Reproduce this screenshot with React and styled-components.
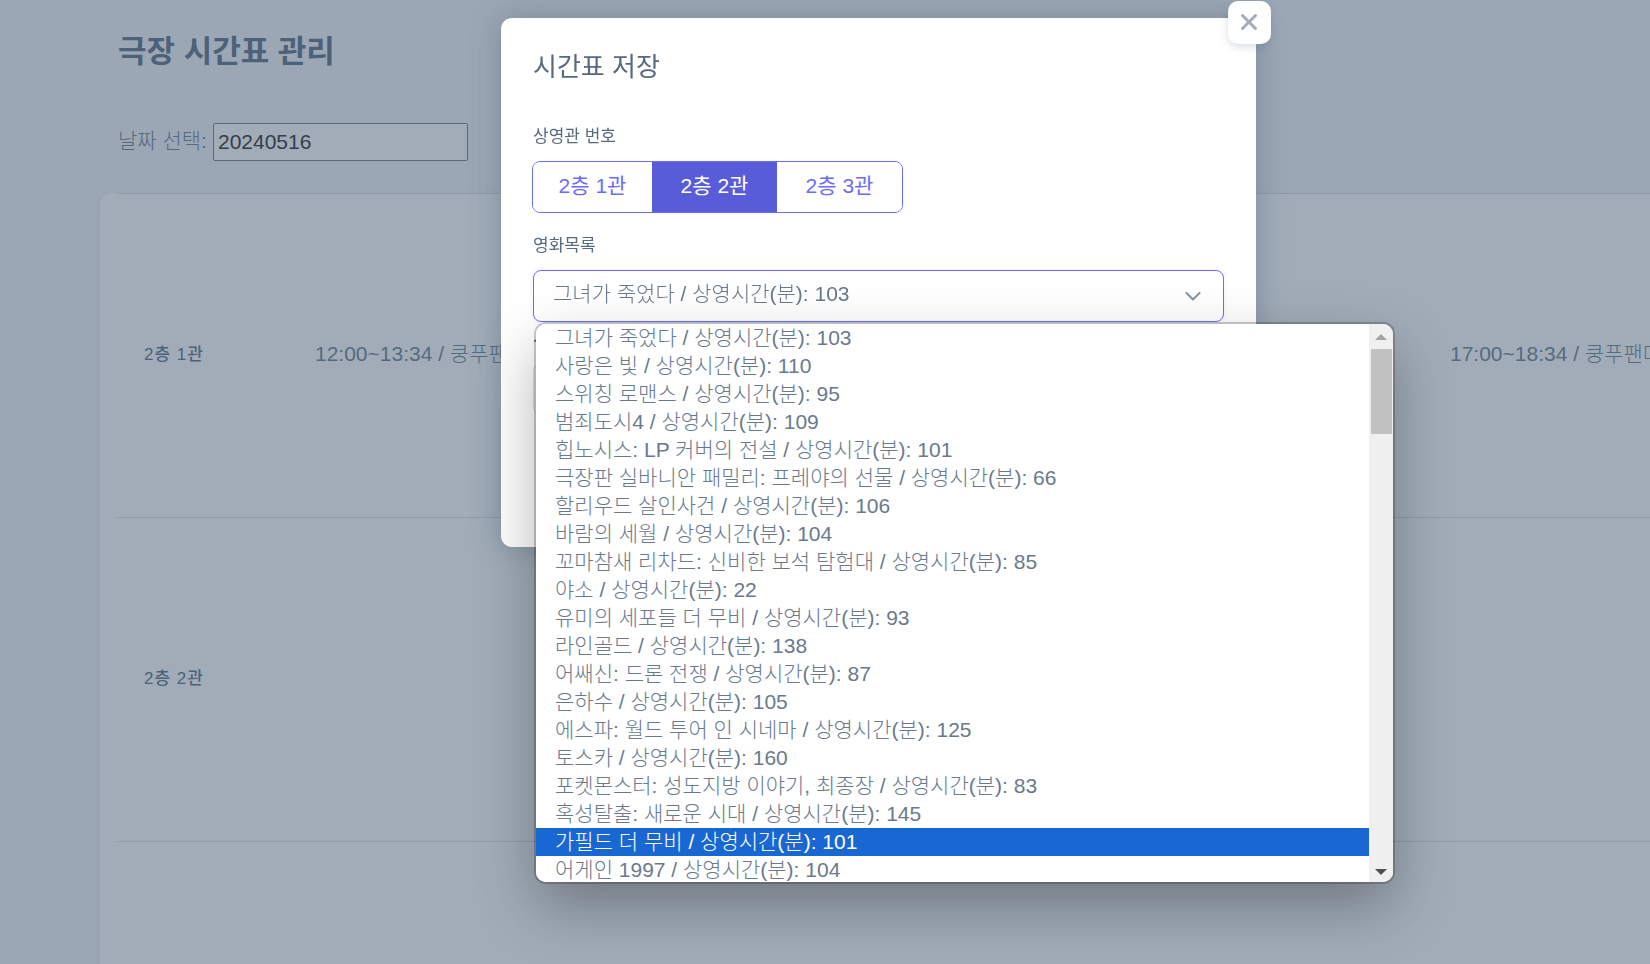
import React from "react";
import styled, { createGlobalStyle, css } from "styled-components";

const GlobalStyle = createGlobalStyle`
  *, *::before, *::after { box-sizing: border-box; }
  html, body, #root { height: 100%; }
  body {
    margin: 0;
    overflow: hidden;
    background: #f5f5f9;
    color: #697a8d;
    font-family: "Liberation Sans", "Noto Sans CJK KR", sans-serif;
    font-size: 21px;
    font-weight: 300;
    line-height: 32px;
  }
  button, input, select { font: inherit; }
`;

const Page = styled.main`
  height: 100%;
  padding: 30px 0 0 100px;
  overflow: hidden;
`;

const PageTitle = styled.h4`
  margin: 0;
  padding-left: 18px;
  color: #566a7f;
  font-size: 31px;
  font-weight: 700;
  line-height: 44px;
`;

const DateRow = styled.div`
  display: flex;
  align-items: center;
  gap: 6px;
  padding: 49px 0 32px 18px;
`;

const DateLabel = styled.label`
  padding-bottom: 3px;
`;

const DateInput = styled.input`
  width: 255px;
  height: 38px;
  padding: 0 4px;
  border: 1px solid #767676;
  border-radius: 2px;
  background: #fff;
  color: #222;
`;

const Card = styled.section`
  padding-left: 17px;
  border-radius: 11px 0 0 11px;
  background: #fff;
  box-shadow: 0 3px 8px rgba(67, 89, 113, 0.12);
`;

const Timetable = styled.table`
  border-collapse: collapse;
  white-space: nowrap;
`;

const Row = styled.tr`
  height: 324px;
  border-top: 1px solid #d9dee3;
`;

const Hall = styled.th`
  min-width: 171px;
  padding: 0 27px 2px;
  color: #566a7f;
  font-size: 17px;
  font-weight: 500;
  letter-spacing: 1px;
  text-align: left;
`;

const Slot = styled.td`
  min-width: 1135px;
  padding: 0 27px 4px;
`;

const Backdrop = styled.div`
  position: fixed;
  inset: 0;
  display: grid;
  grid-template-columns: 501fr 755fr 394fr;
  align-items: start;
  padding-top: 18px;
  background: rgba(67, 89, 113, 0.5);
`;

const Dialog = styled.section`
  position: relative;
  grid-column: 2;
  min-height: 529px;
  padding: 32px;
  border-radius: 11px;
  background: #fff;
  box-shadow: 0 0 30px rgba(67, 89, 113, 0.4);
`;

const CloseButton = styled.button`
  position: absolute;
  top: -17px;
  right: -15px;
  display: grid;
  place-items: center;
  width: 43px;
  height: 43px;
  padding: 0 1px 1px 0;
  border: 0;
  border-radius: 10px;
  background: #fff;
  box-shadow: 0 3px 8px rgba(67, 89, 113, 0.2);
`;

const DialogTitle = styled.h5`
  margin: 0 0 40px;
  color: #566a7f;
  font-size: 26px;
  font-weight: 400;
  line-height: 34px;
`;

const labelStyle = css`
  display: block;
  padding: 0;
  margin-bottom: 11px;
  color: #566a7f;
  font-size: 17px;
  font-weight: 400;
  line-height: 26px;
`;

const Field = styled.div`
  margin-bottom: ${(p) => (p.$tight ? 4 : 20)}px;
`;

const Fieldset = styled.fieldset`
  min-width: 0;
  margin: 0 0 20px;
  padding: 0;
  border: 0;
`;

const Legend = styled.legend`${labelStyle}`;
const Label = styled.label`${labelStyle}`;

const ButtonGroup = styled.div`
  display: inline-flex;
  vertical-align: top;
  margin-left: -1px;
  overflow: hidden;
  border: 1px solid #696cff;
  border-radius: 8px;
`;

const HallButton = styled.button`
  width: ${(p) => (p.$first ? 119 : 125)}px;
  height: 50px;
  padding: 0 0 3px;
  border: 0;
  background: ${(p) => (p.$active ? "#595cd9" : "#fff")};
  color: ${(p) => (p.$active ? "#fff" : "#696cff")};
  font-weight: 400;
`;

const SelectBox = styled.div`
  position: relative;
`;

const controlStyle = css`
  display: block;
  width: 100%;
  height: 52px;
  padding: 0 19px 4px;
  border-radius: 8px;
  background: #fff;
  color: #697a8d;
`;

const MovieSelect = styled.select`
  ${controlStyle}
  appearance: none;
  border: 1px solid #696cff;
  box-shadow: 0 0 5px rgba(105, 108, 255, 0.1);
`;

const TextInput = styled.input`
  ${controlStyle}
  border: 1px solid #d9dee3;
`;

const Chevron = styled.svg`
  position: absolute;
  top: 18px;
  right: 23px;
  pointer-events: none;
`;

const Popup = styled.div`
  position: absolute;
  z-index: 1;
  top: 54px;
  left: 3px;
  display: flex;
  width: calc(100% + 166px);
  height: 558px;
  overflow: hidden;
  border-radius: 10px;
  background: #fff;
  box-shadow: 0 0 0 2px rgba(0, 0, 0, 0.2), 0 24px 60px rgba(0, 0, 0, 0.3);
`;

const Options = styled.ul`
  flex: 1;
  min-width: 0;
  margin: 0;
  padding: 0;
  overflow: hidden;
  list-style: none;
`;

const Option = styled.li`
  height: 28px;
  padding: 0 19px;
  background: ${(p) => (p.$active ? "#1967d2" : "#fff")};
  color: ${(p) => (p.$active ? "#fff" : "#697a8d")};
  line-height: 28px;
  white-space: nowrap;
`;

const ScrollTrack = styled.div`
  display: flex;
  flex-direction: column;
  align-items: center;
  justify-content: space-between;
  width: 24px;
  padding: 10px 0 7px;
  background: #f0f0f0;
`;

const ScrollThumb = styled.div`
  width: 21px;
  height: 85px;
  margin: 9px 0 auto;
  background: #c1c1c1;
`;

const halls = ["2층 1관", "2층 2관", "2층 3관"];

const timetable = [
  { hall: "2층 1관", slots: ["12:00~13:34 / 쿵푸팬더4", "17:00~18:34 / 쿵푸팬더4"] },
  { hall: "2층 2관", slots: ["", ""] },
  { hall: "2층 3관", slots: ["", ""] },
];

const movies = [
  ["그녀가 죽었다", 103],
  ["사랑은 빛", 110],
  ["스위칭 로맨스", 95],
  ["범죄도시4", 109],
  ["힙노시스: LP 커버의 전설", 101],
  ["극장판 실바니안 패밀리: 프레야의 선물", 66],
  ["할리우드 살인사건", 106],
  ["바람의 세월", 104],
  ["꼬마참새 리차드: 신비한 보석 탐험대", 85],
  ["야소", 22],
  ["유미의 세포들 더 무비", 93],
  ["라인골드", 138],
  ["어쌔신: 드론 전쟁", 87],
  ["은하수", 105],
  ["에스파: 월드 투어 인 시네마", 125],
  ["토스카", 160],
  ["포켓몬스터: 성도지방 이야기, 최종장", 83],
  ["혹성탈출: 새로운 시대", 145],
  ["가필드 더 무비", 101],
  ["어게인 1997", 104],
].map(([title, minutes]) => `${title} / 상영시간(분): ${minutes}`);

export default function App() {
  return (
    <>
      <GlobalStyle />
      <Page>
        <PageTitle>극장 시간표 관리</PageTitle>
        <DateRow>
          <DateLabel htmlFor="date">날짜 선택:</DateLabel>
          <DateInput id="date" defaultValue="20240516" />
        </DateRow>
        <Card>
          <Timetable>
            <tbody>
              {timetable.map(({ hall, slots }) => (
                <Row key={hall}>
                  <Hall scope="row">{hall}</Hall>
                  {slots.map((slot, i) => (
                    <Slot key={i}>{slot}</Slot>
                  ))}
                </Row>
              ))}
            </tbody>
          </Timetable>
        </Card>
      </Page>

      <Backdrop>
        <Dialog role="dialog" aria-labelledby="dialog-title">
          <CloseButton type="button" aria-label="닫기">
            <svg width="18" height="18" viewBox="0 0 18 18" fill="none" stroke="#a1acb8" strokeWidth="3" strokeLinecap="round">
              <path d="M2.5 2.5l13 13M15.5 2.5l-13 13" />
            </svg>
          </CloseButton>
          <DialogTitle id="dialog-title">시간표 저장</DialogTitle>

          <Fieldset>
            <Legend>상영관 번호</Legend>
            <ButtonGroup>
              {halls.map((hall, i) => (
                <HallButton key={hall} type="button" $first={i === 0} $active={i === 1} aria-pressed={i === 1}>
                  {hall}
                </HallButton>
              ))}
            </ButtonGroup>
          </Fieldset>

          <Field $tight>
            <Label htmlFor="movie">영화목록</Label>
            <SelectBox>
              <MovieSelect id="movie" defaultValue={movies[0]}>
                {movies.map((movie) => (
                  <option key={movie}>{movie}</option>
                ))}
              </MovieSelect>
              <Chevron width="16" height="16" viewBox="0 0 16 16" fill="none" stroke="#8592a3" strokeWidth="2" strokeLinecap="round" strokeLinejoin="round">
                <path d="M1.5 5L8 11.500L14.500 5" />
              </Chevron>
              <Popup>
                <Options role="listbox" aria-label="영화목록">
                  {movies.map((movie, i) => (
                    <Option key={movie} role="option" aria-selected={i === 18} $active={i === 18}>
                      {movie}
                    </Option>
                  ))}
                </Options>
                <ScrollTrack aria-hidden="true">
                  <svg width="12" height="6" viewBox="0 0 12 6" fill="#a3a3a3">
                    <path d="M0 6L6 0L12 6Z" />
                  </svg>
                  <ScrollThumb />
                  <svg width="12" height="6" viewBox="0 0 12 6" fill="#505050">
                    <path d="M0 0L6 6L12 0Z" />
                  </svg>
                </ScrollTrack>
              </Popup>
            </SelectBox>
          </Field>

          <Field>
            <Label htmlFor="start">시작시간</Label>
            <TextInput id="start" />
          </Field>
        </Dialog>
      </Backdrop>
    </>
  );
}
